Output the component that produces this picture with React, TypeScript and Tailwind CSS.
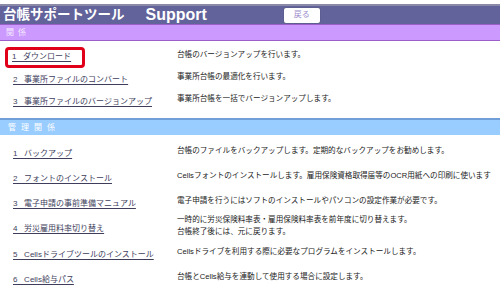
const jp = { fontFamily: '"Liberation Sans", "Noto Sans CJK JP", sans-serif' };

type Row = { num: string; label: string; desc: string[]; h?: string; boxed?: boolean };

const section1: Row[] = [
  { num: '1', label: 'ダウンロード', desc: ['台帳のバージョンアップを行います。'], boxed: true },
  { num: '2', label: '事業所ファイルのコンバート', desc: ['事業所台帳の最適化を行います。'] },
  { num: '3', label: '事業所ファイルのバージョンアップ', desc: ['事業所台帳を一括でバージョンアップします。'] },
];

const section2: Row[] = [
  { num: '1', label: 'バックアップ', desc: ['台帳のファイルをバックアップします。定期的なバックアップをお勧めします。'] },
  { num: '2', label: 'フォントのインストール', desc: ['Cellsフォントのインストールします。雇用保険資格取得届等のOCR用紙への印刷に使います'] },
  { num: '3', label: '電子申請の事前準備マニュアル', desc: ['電子申請を行うにはソフトのインストールやパソコンの設定作業が必要です。'] },
  {
    num: '4',
    label: '労災雇用料率切り替え',
    desc: ['一時的に労災保険料率表・雇用保険料率表を前年度に切り替えます。', '台帳終了後には、元に戻ります。'],
    h: 'h-[26px]',
  },
  { num: '5', label: 'Cellsドライブツールのインストール', desc: ['Cellsドライブを利用する際に必要なプログラムをインストールします。'] },
  { num: '6', label: 'Cells給与パス', desc: ['台帳とCells給与を連動して使用する場合に設定します。'] },
];

function Label({ row }: { row: Row }) {
  return (
    <a className="whitespace-nowrap text-[8px] text-[#3e3e5c] underline underline-offset-2">
      {row.num + '\u00a0\u00a0\u00a0' + row.label}
    </a>
  );
}

function ItemRow({ row, h }: { row: Row; h: string }) {
  return (
    <div className={`flex items-center ${row.h ?? h}`}>
      <div className="w-[177px] shrink-0 pl-[13px]">
        {row.boxed ? (
          <span className="-ml-[8px] inline-flex h-[21px] items-center rounded-[4px] border-[3px] border-[#e0001a] pr-[11px] pl-[4px]">
            <Label row={row} />
          </span>
        ) : (
          <Label row={row} />
        )}
      </div>
      <div className="flex flex-col text-[7.6px] leading-[12px] text-[#222]">
        {row.desc.map((d) => (
          <span key={d} className="whitespace-nowrap">
            {d}
          </span>
        ))}
      </div>
    </div>
  );
}

export default function App() {
  return (
    <div className="h-[308px] w-[500px] overflow-hidden bg-white" style={jp}>
      <div className="h-[4px]" />
      <header className="flex h-[20px] items-center border-t-2 border-[#8a8aa8] bg-[#62639a] pl-[3px]">
        <span className="text-[13.5px] font-bold text-white">台帳サポートツール</span>
        <span className="ml-[21px] text-[16px] font-bold text-white">Support</span>
        <button className="ml-[77px] h-[15px] w-[36px] rounded-[2px] bg-white text-[8px] text-[#9a8ccc] shadow-[0_0_1px_#444]">
          戻る
        </button>
      </header>
      <div className="flex h-[17px] items-center border-y border-[#9a5fc8] bg-[#cc99ff] pl-[6px] text-[8px] tracking-[4px] text-[#f4eaff]">
        関係
      </div>
      <div className="pt-[3px] pb-[8px]">
        {section1.map((r) => (
          <ItemRow key={r.label} row={r} h="h-[22px]" />
        ))}
      </div>
      <div className="flex h-[17px] items-center border-t-2 border-[#6f9fd6] bg-[#99ccff] pl-[8px] text-[8px] tracking-[5px] text-white">
        管理関係
      </div>
      <div className="pt-[3px]">
        {section2.map((r) => (
          <ItemRow key={r.label} row={r} h="h-[25px]" />
        ))}
      </div>
    </div>
  );
}
